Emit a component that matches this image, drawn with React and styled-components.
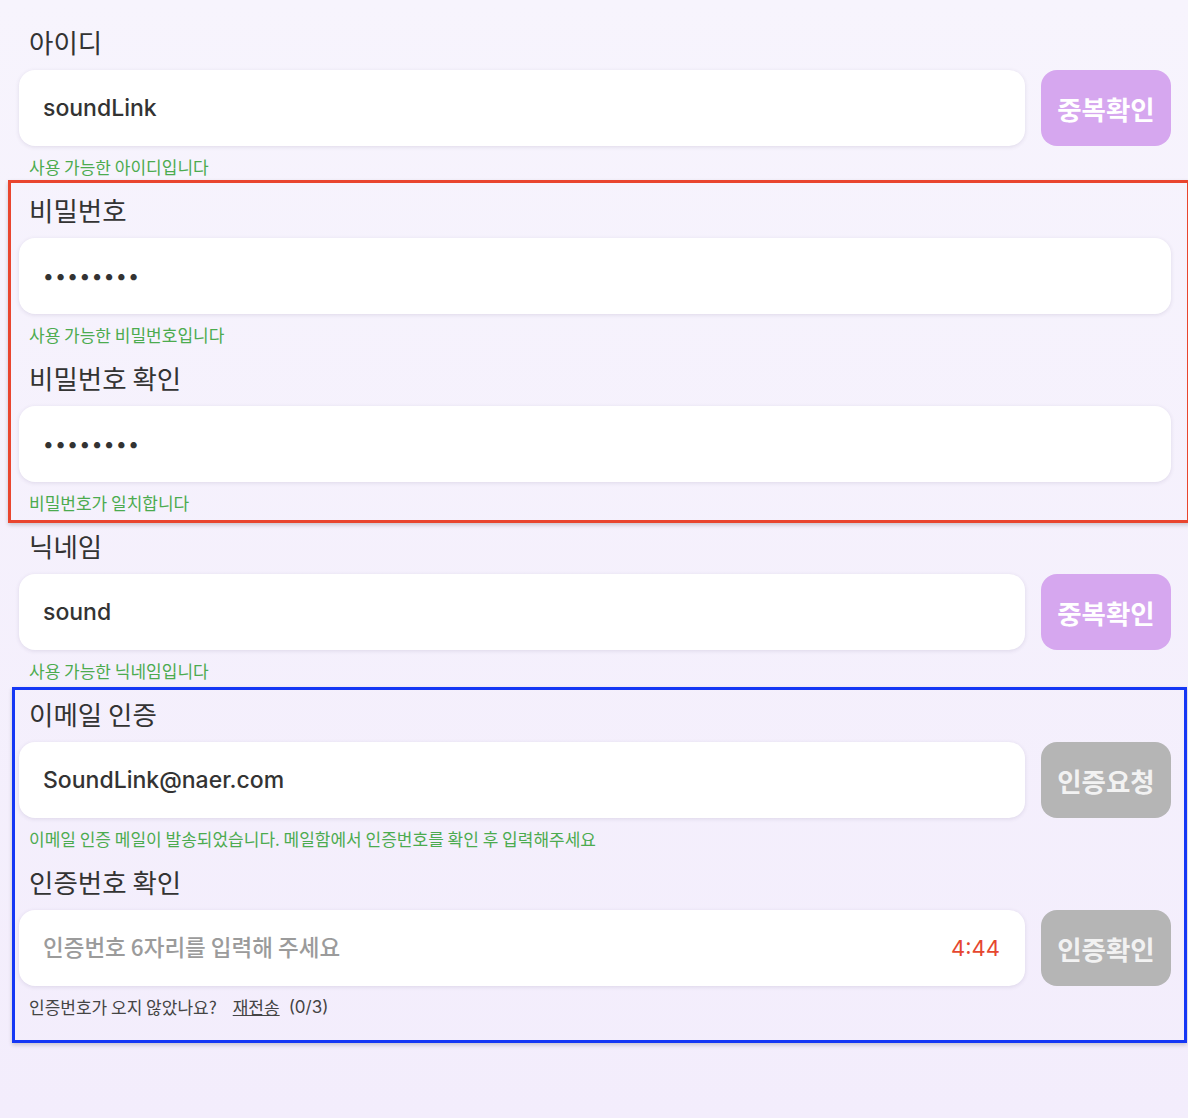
import React from "react";
import styled, { createGlobalStyle } from "styled-components";

const GlobalStyle = createGlobalStyle`
  html, body {
    margin: 0;
    padding: 0;
    overflow-x: hidden;
  }
  body {
    background: linear-gradient(180deg, #f7f4fd 0%, #f3edfc 100%);
    font-family: Inter, "Noto Sans CJK KR", sans-serif;
  }
`;

const Page = styled.div`
  min-height: 1118px;
  box-sizing: border-box;
  padding: 24px 17px 0 19px;
`;

const Form = styled.form`
  display: flex;
  flex-direction: column;
  gap: 15px;
  width: 1152px;
`;

// 설명용 테두리 박스
const Group = styled.div`
  position: relative;
  display: flex;
  flex-direction: column;
  gap: 15px;

  &::before {
    content: "";
    position: absolute;
    top: ${(p) => p.$top}px;
    bottom: ${(p) => p.$bottom}px;
    left: ${(p) => p.$left}px;
    right: ${(p) => p.$right}px;
    border: 3px solid ${(p) => p.$color};
    box-shadow: 0 2px 4px rgba(0, 0, 0, 0.18);
    pointer-events: none;
  }
`;

const Field = styled.div`
  display: flex;
  flex-direction: column;
`;

const Label = styled.label`
  padding-left: 10px;
  font-family: "Noto Sans CJK KR", sans-serif;
  font-size: 26.5px;
  line-height: 36px;
  color: #333;
`;

const Row = styled.div`
  display: flex;
  gap: 16px;
  margin-top: 10px;
  height: 76px;
`;

const InputBox = styled.div`
  flex: 1;
  display: flex;
  align-items: center;
  background: #fff;
  border-radius: 16px;
  box-shadow: 0 1px 4px rgba(60, 40, 90, 0.12);
  padding: 0 25px 0 24px;
`;

const Input = styled.input`
  flex: 1;
  border: none;
  outline: none;
  background: transparent;
  font-family: Inter, "Noto Sans CJK KR", sans-serif;
  font-size: 23px;
  font-weight: 500;
  color: #333;
  padding: 0;

  &[type="password"] {
    font-size: 20px;
    letter-spacing: 1.5px;
  }

  &::placeholder {
    color: #9b9b9b;
    font-family: "Noto Sans CJK KR", sans-serif;
    font-size: 22.5px;
    font-weight: 500;
  }
`;

const Timer = styled.span`
  font-family: Inter, sans-serif;
  font-size: 22px;
  color: #e5472f;
`;

const Button = styled.button`
  width: 130px;
  border: none;
  border-radius: 16px;
  background: ${(p) => (p.$disabled ? "#b5b5b5" : "#d6a7ef")};
  color: ${(p) => (p.$disabled ? "#f2f2f2" : "#fff")};
  font-family: "Noto Sans CJK KR", sans-serif;
  font-size: 26.5px;
  font-weight: 700;
  cursor: pointer;
`;

const Helper = styled.p`
  margin: 11px 0 0;
  padding-left: 10px;
  font-family: "Noto Sans CJK KR", sans-serif;
  font-size: 17px;
  line-height: 20px;
  color: #4cab4f;
`;

const Footer = styled.p`
  margin: 11px 0 0;
  padding-left: 10px;
  font-family: "Noto Sans CJK KR", sans-serif;
  font-size: 17px;
  line-height: 20px;
  color: #444;
  display: flex;
  gap: 16px;
`;

const Resend = styled.a`
  color: #444;
  text-decoration: underline;
  cursor: pointer;
`;

const Count = styled.span`
  margin-left: -7px;
  font-family: Inter, sans-serif;
`;

const TextField = ({ label, type = "text", value, placeholder, button, disabled, helper, timer, footer }) => (
  <Field>
    <Label>{label}</Label>
    <Row>
      <InputBox>
        <Input type={type} defaultValue={value} placeholder={placeholder} readOnly />
        {timer && <Timer>{timer}</Timer>}
      </InputBox>
      {button && <Button type="button" $disabled={disabled}>{button}</Button>}
    </Row>
    {helper && <Helper>{helper}</Helper>}
    {footer}
  </Field>
);

const App = () => {
  return (
    <>
      <GlobalStyle />
      <Page>
        <Form>
          <TextField label="아이디" value="soundLink" button="중복확인" helper="사용 가능한 아이디입니다" />
          <Group $color="#e9452f" $top={-12} $bottom={-10} $left={-11} $right={-19}>
            <TextField label="비밀번호" type="password" value="12345678" helper="사용 가능한 비밀번호입니다" />
            <TextField label="비밀번호 확인" type="password" value="12345678" helper="비밀번호가 일치합니다" />
          </Group>
          <TextField label="닉네임" value="sound" button="중복확인" helper="사용 가능한 닉네임입니다" />
          <Group $color="#1537f5" $top={-9} $bottom={-26} $left={-7} $right={-16}>
            <TextField
              label="이메일 인증"
              value="SoundLink@naer.com"
              button="인증요청"
              disabled
              helper="이메일 인증 메일이 발송되었습니다. 메일함에서 인증번호를 확인 후 입력해주세요"
            />
            <TextField
              label="인증번호 확인"
              placeholder="인증번호 6자리를 입력해 주세요"
              timer="4:44"
              button="인증확인"
              disabled
              footer={
                <Footer>
                  <span>인증번호가 오지 않았나요?</span>
                  <Resend>재전송</Resend>
                  <Count>(0/3)</Count>
                </Footer>
              }
            />
          </Group>
        </Form>
      </Page>
    </>
  );
};

export default App;
